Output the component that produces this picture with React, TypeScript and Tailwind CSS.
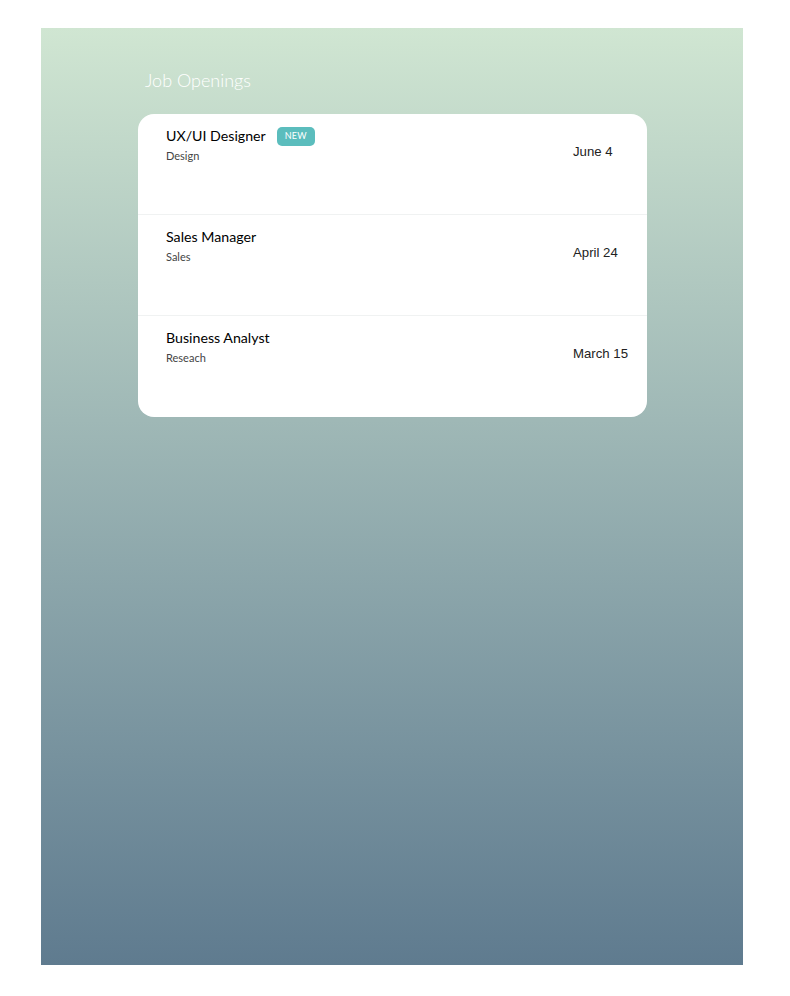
import React from "react";

const jobs = [
  { title: "UX/UI Designer", dept: "Design", date: "June 4", isNew: true },
  { title: "Sales Manager", dept: "Sales", date: "April 24", isNew: false },
  { title: "Business Analyst", dept: "Reseach", date: "March 15", isNew: false },
];

export default function App() {
  return (
    <div className="w-[790px] h-[996px] bg-white pt-[28px] pl-[41px]">
      <div className="w-[702px] h-[937px] bg-gradient-to-b from-[#d0e6d2] to-[#5f7b8f] pt-[40px] pl-[97px]">
        <h1 className="pl-[7px] text-[18px] leading-[24px] text-white font-light" style={{ fontFamily: "Lato, 'Open Sans', sans-serif" }}>
          Job Openings
        </h1>
        <div className="mt-[22px] w-[509px] bg-white rounded-[16px] overflow-hidden">
          {jobs.map((j, i) => (
            <div
              key={j.title}
              className={`flex h-[101px] pl-[28px] ${i < jobs.length - 1 ? "border-b border-[#f0f2f2]" : ""}`}
            >
              <div className="flex-1 pt-[12px]" style={{ fontFamily: "Lato, 'Open Sans', sans-serif" }}>
                <div className="flex items-center h-[20px]">
                  <span className="text-[14.2px] text-black">{j.title}</span>
                  {j.isNew && (
                    <span className="ml-[11px] h-[19px] w-[38px] flex items-center justify-center rounded-[5px] bg-[#5bbdbd] text-white text-[9px] tracking-[0.3px]">
                      NEW
                    </span>
                  )}
                </div>
                <div className="mt-[2px] text-[11px] text-[#444]">{j.dept}</div>
              </div>
              <div
                className="w-[74px] pt-[28px] text-[13.2px] text-[#222]"
                style={{ fontFamily: "'Liberation Sans', Arial, sans-serif" }}
              >
                {j.date}
              </div>
            </div>
          ))}
        </div>
      </div>
    </div>
  );
}
